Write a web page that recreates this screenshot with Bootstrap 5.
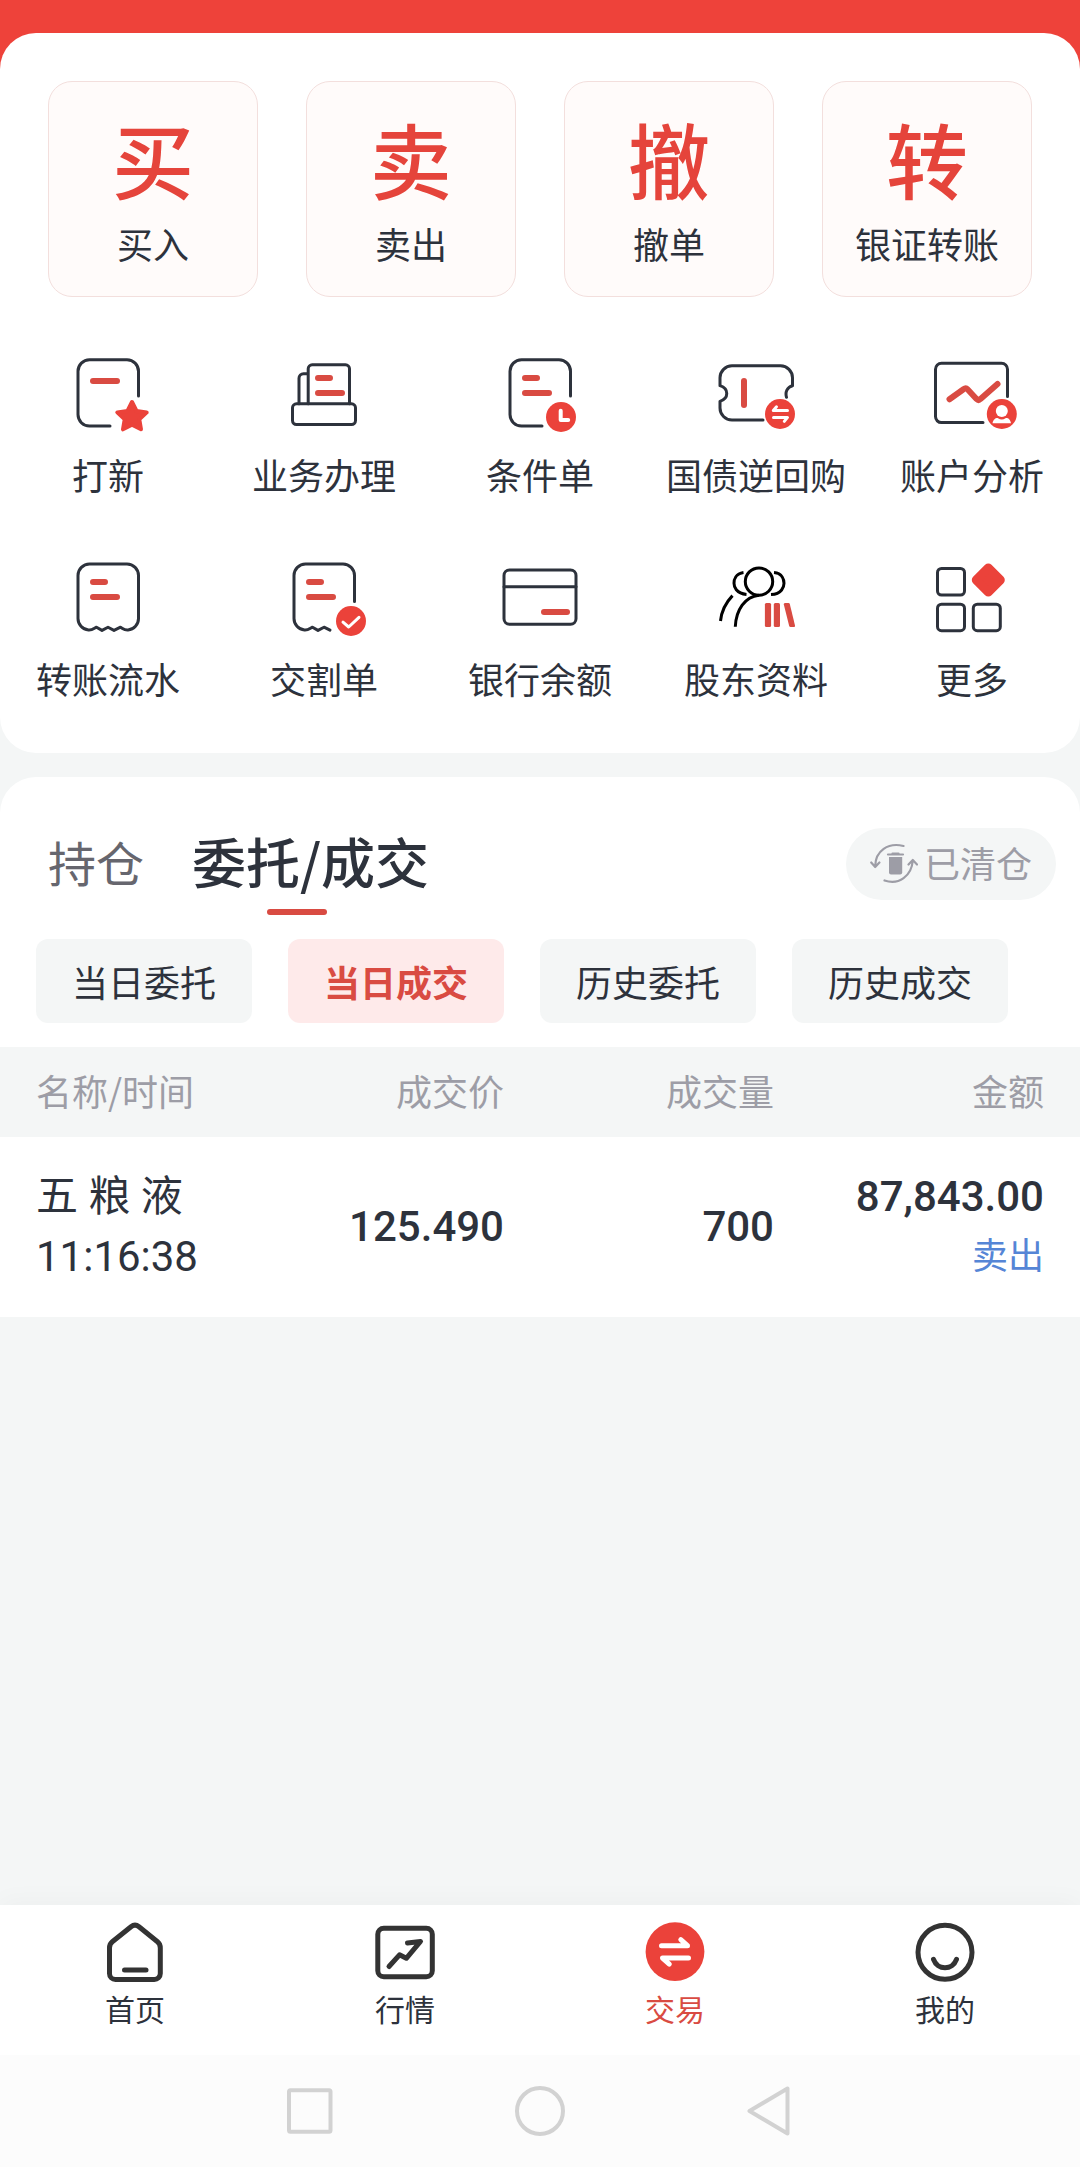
<!DOCTYPE html>
<html lang="zh-CN">
<head>
<meta charset="utf-8">
<meta name="viewport" content="width=device-width, initial-scale=1">
<title>交易</title>
<link href="https://cdn.jsdelivr.net/npm/bootstrap@5.3.0/dist/css/bootstrap.min.css" rel="stylesheet">
<style>
:root { --brand: #eb423a; --ink: #2d323c; --soft: #f4f6f6; --muted: #9d9da6; }
body { font-family: "Noto Sans CJK SC", sans-serif; color: var(--ink); background: var(--soft); font-size: 36px; }
a, button { color: inherit; text-decoration: none; }
svg { display: block; fill: none; stroke-linecap: round; stroke-linejoin: round; }
.top-zone { background: linear-gradient(#ee423a 80px, var(--soft) 80px); padding-top: 33px; }
.sheet { background: #fff; border-radius: 36px; }
.sheet-tools { padding: 48px 0 50px; }
.sheet-orders { border-radius: 36px 36px 0 0; margin-top: 24px; padding-top: 51px; }
.tile-row { gap: 48px; padding: 0 48px; }
.tile { flex: 1 1 0; background: #fffbfa; border: 1px solid #f3dfdd; border-radius: 24px; padding: 28px 0 30px; gap: 14px; }
.tile-glyph { font-size: 82px; line-height: 96px; font-weight: 500; color: #e5443b; }
.tile-label { line-height: 46px; }
.tool-grid { margin-top: 51px; row-gap: 53px; }
.tool { gap: 5px; line-height: 50px; white-space: nowrap; }
.ico { width: 96px; height: 96px; stroke: var(--ink); stroke-width: 3; }
.ico .r { stroke: #d94b42; stroke-width: 6; }
.ico .rf { fill: var(--brand); stroke: none; }
.ico .w { stroke: #fff; }
.tab-row { padding: 0 24px 0 48px; }
.tabs { gap: 48px; }
.tab-link { font-size: 48px; line-height: 66px; color: #66666e; }
.tab-link.active { font-size: 54px; font-weight: 500; color: var(--ink); }
.tab-link.active::after { content: ""; display: block; width: 60px; height: 6px; margin: 15px 0 0 75px; border-radius: 3px; background: #d94b42; }
.cleared { background: var(--soft); color: var(--muted); border: 0; border-radius: 36px; height: 72px; padding: 0 24px 4px; gap: 6px; }
.chips { gap: 36px; padding: 24px 36px; }
.chip { flex: 0 1 216px; height: 84px; border: 0; border-radius: 12px; background: var(--soft); white-space: nowrap; padding: 0; }
.chip.active { background: #feeaea; color: #d94b42; font-weight: 700; }
.deals { table-layout: fixed; background: #fff; }
.deals th, .deals td { padding: 0 36px; font-weight: 400; text-align: right; vertical-align: middle; white-space: nowrap; }
.deals th { background: var(--soft); color: var(--muted); height: 90px; padding-bottom: 4px; }
.deals td { height: 180px; font-family: Roboto, "Noto Sans CJK SC", sans-serif; font-size: 42px; line-height: 60px; }
.deals th:first-child, .deals td:first-child { text-align: left; padding-right: 0; }
.deals .num { font-weight: 500; }
.deals .side { font-size: 36px; color: #5585d6; }
.app-nav { background: #fff; padding: 12px 0 28px; box-shadow: 0 -4px 24px rgba(0,0,0,.03); font-size: 30px; line-height: 38px; }
.app-nav a { flex: 1 1 0; }
.app-nav .active { color: #d94b42; }
.nav-ico { width: 72px; height: 72px; stroke: #333; stroke-width: 5; }
.sys-nav { background: #fcfcfc; height: 112px; gap: 176px; }
.sys-nav button { border: 0; background: none; padding: 0; }
.sys-nav svg { width: 54px; height: 54px; stroke: #d2d2d2; stroke-width: 4; }
</style>
</head>
<body>
<div class="d-flex flex-column min-vh-100">
  <main>
    <div class="top-zone">
      <section class="sheet sheet-tools">
        <div class="tile-row d-flex">
          <a href="#" class="tile d-flex flex-column align-items-center"><span class="tile-glyph">买</span><span class="tile-label">买入</span></a>
          <a href="#" class="tile d-flex flex-column align-items-center"><span class="tile-glyph">卖</span><span class="tile-label">卖出</span></a>
          <a href="#" class="tile d-flex flex-column align-items-center"><span class="tile-glyph">撤</span><span class="tile-label">撤单</span></a>
          <a href="#" class="tile d-flex flex-column align-items-center"><span class="tile-glyph">转</span><span class="tile-label">银证转账</span></a>
        </div>
        <div class="tool-grid row row-cols-5 gx-0">
          <a href="#" class="tool d-flex flex-column align-items-center">
            <svg class="ico" viewBox="0 0 96 96"><path d="M78.500 48V23.300a11.500 11.500 0 0 0-11.500-11.500H29.500A11.500 11.500 0 0 0 18 23.300v43.300A11.500 11.500 0 0 0 29.500 78.100H50"/><path class="r" d="M33 33H57"/><path d="M72 54l4.500 9 10.200 1.400-7.400 7 1.700 9.900-9-4.600-9 4.600 1.700-9.900-7.400-7 10.200-1.400z" fill="#eb423a" stroke="#eb423a" stroke-width="4"/></svg>
            打新</a>
          <a href="#" class="tool d-flex flex-column align-items-center">
            <svg class="ico" viewBox="0 0 96 96"><rect x="16.500" y="55.800" width="63" height="20.800" rx="4"/><path d="M32.200 55.800V20.800a4 4 0 0 1 4-4h33.300a4 4 0 0 1 4 4V55.800M23 55.800V30.300a4.500 4.500 0 0 1 4.500-4.500H32"/><path class="r" d="M42 30H54M42 45H66"/></svg>
            业务办理</a>
          <a href="#" class="tool d-flex flex-column align-items-center">
            <svg class="ico" viewBox="0 0 96 96"><path d="M78.500 48V23.300a11.500 11.500 0 0 0-11.500-11.500H29.500A11.500 11.500 0 0 0 18 23.300v43.300A11.500 11.500 0 0 0 29.500 78.100H50"/><path class="r" d="M33 30H45M33 45H57"/><circle class="rf" cx="69" cy="69" r="15"/><path class="w" stroke-width="4" d="M68.700 62.700v9.300h7.500"/></svg>
            条件单</a>
          <a href="#" class="tool d-flex flex-column align-items-center">
            <svg class="ico" viewBox="0 0 96 96"><path d="M55 72H24A12 12 0 0 1 12 60V53.300c9-3 9-12.600 0-15.600V29.800a12 12 0 0 1 12-12H72.500a12 12 0 0 1 12 12V37.700c-5.500 1.500-7.500 6.500-6 11.600"/><path class="r" d="M36 33V57"/><circle class="rf" cx="72" cy="66" r="15"/><path class="w" d="M68.500 58.800l-3.200 3.700H79.500M65.500 69.400H79.500l-3.200 4"/></svg>
            国债逆回购</a>
          <a href="#" class="tool d-flex flex-column align-items-center">
            <svg class="ico" viewBox="0 0 96 96"><path d="M83.500 48.500V21.200a6 6 0 0 0-6-6H17.500a6 6 0 0 0-6 6V68.600a6 6 0 0 0 6 6H59"/><path class="r" d="M25.500 51.300L39.500 41.200Q41.800 39.500 43.500 41.300L52.500 51Q54.500 53 56.500 51L73.500 36"/><circle class="rf" cx="77.800" cy="66" r="15"/><circle cx="77.800" cy="63" r="6" fill="#fff" stroke="none"/><path d="M68.500 75.200c1-4.500 4-5.500 5.500-5 2.500 1.600 5 1.600 7.500 0 2-.5 4.500.5 5.500 5z" fill="#fff" stroke="none"/></svg>
            账户分析</a>
          <a href="#" class="tool d-flex flex-column align-items-center">
            <svg class="ico" viewBox="0 0 96 96"><path d="M28.500 78A11.500 11.500 0 0 1 18 66.500V23.500a11.500 11.500 0 0 1 11.500-11.500H67A11.500 11.500 0 0 1 78.500 23.500v43A11.500 11.500 0 0 1 68 78Q65 78.200 62.500 76.500L60.500 75.200L54 78.400L48 75.200L42 78.400L36.500 75.200L34 76.500Q31.500 78.200 28.500 78z"/><path class="r" d="M33 30H45M33 45H57"/></svg>
            转账流水</a>
          <a href="#" class="tool d-flex flex-column align-items-center">
            <svg class="ico" viewBox="0 0 96 96"><path d="M78.500 49.500V23.500A11.500 11.500 0 0 0 67 12H29.500A11.500 11.500 0 0 0 18 23.500v43A11.500 11.500 0 0 0 28.500 78Q31.500 78.200 34 76.500L36.500 75.200L42 78.400L48 75.200L54 78.200"/><path class="r" d="M33 30H45M33 45H57"/><circle class="rf" cx="75" cy="69" r="15"/><path class="w" d="M67 70.200L72.700 75L83 65.300"/></svg>
            交割单</a>
          <a href="#" class="tool d-flex flex-column align-items-center">
            <svg class="ico" viewBox="0 0 96 96"><rect x="12" y="18" width="72" height="54.300" rx="5.500"/><path d="M12 34.700H84"/><path class="r" d="M52 60H75"/></svg>
            银行余额</a>
          <a href="#" class="tool d-flex flex-column align-items-center">
            <svg class="ico" viewBox="0 0 96 96"><g stroke="#000" stroke-linecap="butt"><circle cx="51" cy="29.600" r="13.700"/><path d="M35.500 20.600C27.500 21.700 26 28 26 31.300S28 41.600 38.500 42.400M66 20.600C74.500 21.300 76 28 76 31.300S74 42 63 42.600M24.500 43.600C18 50.400 13.500 59 12.500 69M51 43.200C37 44.500 28 58 27.300 74.700"/></g><g fill="#d94b42" stroke="none"><rect x="56.900" y="51" width="6.200" height="24" rx="1.500"/><rect x="65.800" y="51" width="6.200" height="24" rx="1.500"/><path d="M77 51h3.500q1 0 1.300 1L87 73.500q.3 1.500-1 1.500H82.500q-1 0-1.300-1L75.800 52.500q-.3-1.500 1.200-1.500z"/></g></svg>
            股东资料</a>
          <a href="#" class="tool d-flex flex-column align-items-center">
            <svg class="ico" viewBox="0 0 96 96"><rect x="13.500" y="16.500" width="27" height="26.500" rx="4"/><rect x="13.500" y="52.200" width="27" height="26.500" rx="4"/><rect x="49.300" y="52.200" width="27" height="26.500" rx="4"/><path d="M64.300 16L76.300 28L64.300 40L52.300 28z" fill="#eb423a" stroke="#eb423a" stroke-width="9"/></svg>
            更多</a>
        </div>
      </section>
    </div>

    <section class="sheet sheet-orders">
      <div class="tab-row d-flex justify-content-between align-items-start">
        <nav class="tabs d-flex align-items-start">
          <a href="#" class="tab-link">持仓</a>
          <a href="#" class="tab-link active" aria-current="page">委托/成交</a>
        </nav>
        <button type="button" class="cleared d-flex align-items-center">
          <svg width="48" height="48" viewBox="0 -4 48 48" stroke="#9d9da6" stroke-width="2.200"><path d="M33.500 4C18 0 5.500 9 5.200 24M1.200 20.500l4 4.500 4.200-4.500M14.500 38.500C29 43.500 41.500 34 42.800 18.500M38.500 22.500l4.300-4.500 4.200 4.500"/><path d="M18 12.500H33M22.500 11.500H28.500"/><path d="M19 15h13.200v15.500a2 2 0 0 1-2 2H21a2 2 0 0 1-2-2z" fill="#9d9da6" stroke="none"/></svg>
          <span>已清仓</span>
        </button>
      </div>
      <div class="chips d-flex">
        <button type="button" class="chip">当日委托</button>
        <button type="button" class="chip active">当日成交</button>
        <button type="button" class="chip">历史委托</button>
        <button type="button" class="chip">历史成交</button>
      </div>
      <table class="deals w-100">
        <thead><tr><th scope="col">名称/时间</th><th scope="col">成交价</th><th scope="col">成交量</th><th scope="col">金额</th></tr></thead>
        <tbody><tr>
          <td>五 粮 液<br>11:16:38</td>
          <td class="num">125.490</td>
          <td class="num">700</td>
          <td><div class="num">87,843.00</div><div class="side">卖出</div></td>
        </tr></tbody>
      </table>
    </section>
  </main>

  <footer class="mt-auto">
    <nav class="app-nav d-flex">
      <a href="#" class="d-flex flex-column align-items-center"><svg class="nav-ico" viewBox="0 0 72 72"><path d="M32 9.700Q36 6.500 40 9.700L58.500 24.700Q61.300 27 61.300 31V56.500a6 6 0 0 1-6 6H16.500a6 6 0 0 1-6-6V31Q10.500 27 13.300 24.700z"/><path d="M25.500 53H47"/></svg>首页</a>
      <a href="#" class="d-flex flex-column align-items-center"><svg class="nav-ico" viewBox="0 0 72 72"><rect x="8.800" y="11.300" width="54.500" height="48.500" rx="6"/><path d="M20 49.500L30.500 37.800L37.300 41.300L51.500 24.400L38.500 25.900"/></svg>行情</a>
      <a href="#" class="active d-flex flex-column align-items-center" aria-current="page"><svg class="nav-ico" viewBox="0 0 72 72"><circle cx="36" cy="34.700" r="29.400" fill="#eb423a" stroke="none"/><path stroke="#fff" d="M22.500 28.700H48.500L41.800 22.700M49.500 41.100H23.500L30.300 47.200"/></svg>交易</a>
      <a href="#" class="d-flex flex-column align-items-center"><svg class="nav-ico" viewBox="0 0 72 72"><circle cx="36" cy="35.300" r="27"/><path d="M24.500 42.300C28.500 53.500 43.500 53.500 47.500 42.300"/></svg>我的</a>
    </nav>
    <div class="sys-nav d-flex justify-content-center align-items-center">
      <button type="button" aria-label="最近任务"><svg viewBox="0 0 54 54"><rect x="6" y="6.300" width="41.500" height="41.500" rx="1.500"/></svg></button>
      <button type="button" aria-label="主屏幕"><svg viewBox="0 0 54 54"><circle cx="27" cy="27" r="23"/></svg></button>
      <button type="button" aria-label="返回"><svg viewBox="0 0 54 54"><path d="M44.500 4.500V49.500L6.500 27z"/></svg></button>
    </div>
  </footer>
</div>
<script src="https://cdn.jsdelivr.net/npm/bootstrap@5.3.0/dist/js/bootstrap.bundle.min.js"></script>
</body>
</html>
